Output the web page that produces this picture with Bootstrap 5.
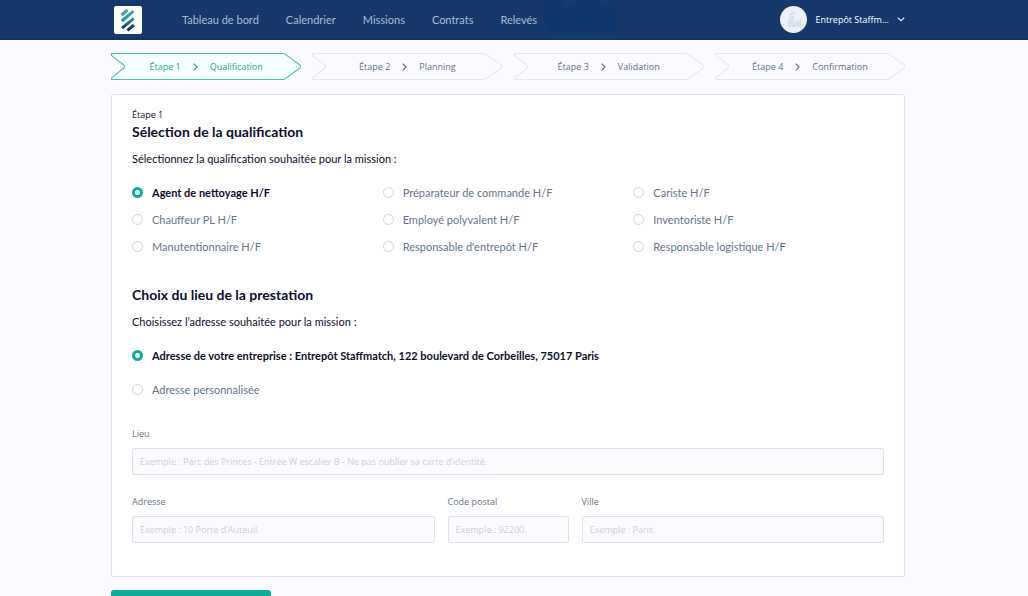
<!DOCTYPE html>
<html lang="fr">
<head>
<meta charset="utf-8">
<meta name="viewport" content="width=device-width, initial-scale=1">
<title>Staffmatch – Nouvelle mission</title>
<link rel="stylesheet" href="https://cdn.jsdelivr.net/npm/bootstrap@5.3.0/dist/css/bootstrap.min.css">
<style>
:root{--navy:#16396c;--ink:#0d0e2c;--slate:#66758a;--line:#e0e2ed;--teal:#13ab98}
body{font-family:Lato,"Open Sans",sans-serif;font-size:11px;line-height:16px;color:var(--ink);background:#fafaff}
.page-shell{padding-right:12px}
.page-width{width:100%;max-width:794px;margin-inline:auto}
.topbar{background:var(--navy);height:40px;border-bottom:1px solid #0f3263}
.brand-tile{width:28px;height:28px;margin-left:3px;margin-right:40px;background:#fff;border-radius:2px}
.topbar .nav-link{font-size:11px;color:#a9bad3;padding:0}
.main-links{gap:27px}
.nav-shape{position:absolute;left:53%;top:0;height:39px;width:80px;fill:#0f386e}
.avatar{width:27px;height:27px;background:#edf1fa}
.small-text{font-family:"Open Sans",sans-serif;font-size:9px;line-height:14px}
.account{color:#fff;background:none;border:0;padding:0}
.steps{display:grid;grid-template-columns:repeat(4,1fr);gap:11px;margin-top:13px;margin-bottom:14px}
.step{height:27px;color:var(--slate)}
.step > svg{position:absolute;inset:0;width:100%;height:100%;fill:none;stroke:#e7e7ef}
.step a{position:relative;color:inherit;text-decoration:none;gap:12px}
.step.current{color:#2aa595}
.step.current > svg{fill:#f5fffd;stroke:#4ebfb0}
.panel{border:1px solid var(--line);border-radius:2px;background:#fff;padding:13px 20px 33px}
h1,h2{font-size:14px;line-height:20px;font-weight:700;margin:0}
.lead-text{margin:9px 0 12px}
.section-gap{margin-top:25px}
.choice{display:flex;align-items:center;min-height:27px;margin:0;padding:0;gap:9px;color:var(--slate)}
.choice .form-check-input{float:none;flex:none;width:11px;height:11px;margin:0;border:1px solid #d3d5e3;box-shadow:none}
.choice .form-check-input:checked{background:#fff;border:3px solid var(--teal)}
.choice .form-check-input:checked + label{font-weight:700;color:var(--ink)}
.custom-address{margin-top:7px}
.fields{margin-top:24px;display:grid;grid-template-columns:5fr 2fr 5fr;gap:20px 13px}
.fields .wide{grid-column:1/-1}
.fields label{display:block;color:var(--slate);margin-bottom:7px}
.fields .form-control{height:27px;padding:0 7px;border:1px solid var(--line);border-radius:2px;background:#fbfbfe}
.fields .form-control::placeholder{color:#cccfe0}
.next-btn{width:160px;height:40px;margin-top:13px;border:0;border-radius:3px;background:var(--teal)}
</style>
</head>
<body>
<header class="topbar page-shell position-relative">
  <svg class="nav-shape" viewBox="0 0 80 39" aria-hidden="true"><path d="M0 0H16L21 9 29 3Q36 1 46 2 60 3 69 10 76 22 71 33L60 36H12Q0 30 0 18z"/></svg>
  <nav class="page-width h-100 d-flex align-items-center position-relative" aria-label="Navigation principale">
    <a href="#" class="brand-tile d-flex align-items-center justify-content-center" aria-label="Accueil">
      <svg width="16" height="24" viewBox="0 0 16 24" fill="none" stroke-width="3">
        <defs><linearGradient id="g" gradientUnits="userSpaceOnUse" x1="0" y1="2" x2="0" y2="23"><stop offset="0" stop-color="#4aa8a2"/><stop offset=".5" stop-color="#1f918b"/><stop offset=".66" stop-color="#28527b"/><stop offset="1" stop-color="#102c54"/></linearGradient></defs>
        <g stroke="url(#g)"><path d="M1.6 7 7.6 2"/><path d="M1.8 13 13.4 3.2"/><path d="M2 20.2 13.8 10.4"/><path d="M7.4 22.4 14 17"/></g>
      </svg>
    </a>
    <div class="main-links d-flex">
      <a class="nav-link" href="#">Tableau de bord</a>
      <a class="nav-link" href="#">Calendrier</a>
      <a class="nav-link" href="#">Missions</a>
      <a class="nav-link" href="#">Contrats</a>
      <a class="nav-link" href="#">Relevés</a>
    </div>
    <button type="button" class="account small-text d-flex align-items-center ms-auto" aria-haspopup="true">
      <span class="avatar rounded-circle d-flex align-items-center justify-content-center me-2">
        <svg width="14" height="15" viewBox="0 0 14 15" fill="#dcdfee"><path d="M1 15V6h3V4h3v6l3-2v2l4-3v8zM2 5V2l2-2h4v3H4v2z"/></svg>
      </span>
      <span class="me-2">Entrepôt Staffm...</span>
      <svg width="8" height="5" viewBox="0 0 8 5" fill="none" stroke="#dce6f5" stroke-width="1.2"><path d="M.8.8 4 3.8 7.2.8"/></svg>
    </button>
  </nav>
</header>

<main class="page-shell">
  <div class="page-width">
    <ol class="steps small-text list-unstyled" aria-label="Étapes">
      <li class="step current position-relative d-flex align-items-center justify-content-center" aria-current="step">
        <svg viewBox="0 0 190 27" preserveAspectRatio="none"><path d="M.5.5H173L189.5 12.5V14.5L173 26.5H.5V25L13.5 14.5V12.5L.5 2.5z"/></svg>
        <a href="#" class="d-flex align-items-center"><span>Étape 1</span><svg width="5" height="8" viewBox="0 0 5 8" fill="none" stroke="currentColor" stroke-width="1.2"><path d="M.7.7 4 4 .7 7.3"/></svg><span>Qualification</span></a>
      </li>
      <li class="step position-relative d-flex align-items-center justify-content-center">
        <svg viewBox="0 0 190 27" preserveAspectRatio="none"><path d="M.5.5H173L189.5 12.5V14.5L173 26.5H.5V25L13.5 14.5V12.5L.5 2.5z"/></svg>
        <a href="#" class="d-flex align-items-center"><span>Étape 2</span><svg width="5" height="8" viewBox="0 0 5 8" fill="none" stroke="currentColor" stroke-width="1.2"><path d="M.7.7 4 4 .7 7.3"/></svg><span>Planning</span></a>
      </li>
      <li class="step position-relative d-flex align-items-center justify-content-center">
        <svg viewBox="0 0 190 27" preserveAspectRatio="none"><path d="M.5.5H173L189.5 12.5V14.5L173 26.5H.5V25L13.5 14.5V12.5L.5 2.5z"/></svg>
        <a href="#" class="d-flex align-items-center"><span>Étape 3</span><svg width="5" height="8" viewBox="0 0 5 8" fill="none" stroke="currentColor" stroke-width="1.2"><path d="M.7.7 4 4 .7 7.3"/></svg><span>Validation</span></a>
      </li>
      <li class="step position-relative d-flex align-items-center justify-content-center">
        <svg viewBox="0 0 190 27" preserveAspectRatio="none"><path d="M.5.5H173L189.5 12.5V14.5L173 26.5H.5V25L13.5 14.5V12.5L.5 2.5z"/></svg>
        <a href="#" class="d-flex align-items-center"><span>Étape 4</span><svg width="5" height="8" viewBox="0 0 5 8" fill="none" stroke="currentColor" stroke-width="1.2"><path d="M.7.7 4 4 .7 7.3"/></svg><span>Confirmation</span></a>
      </li>
    </ol>

    <form>
      <div class="panel">
        <div class="small-text">Étape 1</div>
        <h1>Sélection de la qualification</h1>
        <p class="lead-text">Sélectionnez la qualification souhaitée pour la mission :</p>
        <div class="row row-cols-3 g-0">
          <div class="col choice"><input class="form-check-input" type="radio" name="job" id="j1" checked><label for="j1">Agent de nettoyage H/F</label></div>
          <div class="col choice"><input class="form-check-input" type="radio" name="job" id="j2"><label for="j2">Préparateur de commande H/F</label></div>
          <div class="col choice"><input class="form-check-input" type="radio" name="job" id="j3"><label for="j3">Cariste H/F</label></div>
          <div class="col choice"><input class="form-check-input" type="radio" name="job" id="j4"><label for="j4">Chauffeur PL H/F</label></div>
          <div class="col choice"><input class="form-check-input" type="radio" name="job" id="j5"><label for="j5">Employé polyvalent H/F</label></div>
          <div class="col choice"><input class="form-check-input" type="radio" name="job" id="j6"><label for="j6">Inventoriste H/F</label></div>
          <div class="col choice"><input class="form-check-input" type="radio" name="job" id="j7"><label for="j7">Manutentionnaire H/F</label></div>
          <div class="col choice"><input class="form-check-input" type="radio" name="job" id="j8"><label for="j8">Responsable d'entrepôt H/F</label></div>
          <div class="col choice"><input class="form-check-input" type="radio" name="job" id="j9"><label for="j9">Responsable logistique H/F</label></div>
        </div>

        <h2 class="section-gap">Choix du lieu de la prestation</h2>
        <p class="lead-text">Choisissez l’adresse souhaitée pour la mission :</p>
        <div class="choice"><input class="form-check-input" type="radio" name="place" id="p1" checked><label for="p1">Adresse de votre entreprise : Entrepôt Staffmatch, 122 boulevard de Corbeilles, 75017 Paris</label></div>
        <div class="choice custom-address"><input class="form-check-input" type="radio" name="place" id="p2"><label for="p2">Adresse personnalisée</label></div>

        <div class="fields small-text">
          <div class="wide"><label for="lieu">Lieu</label><input class="form-control small-text" type="text" id="lieu" placeholder="Exemple : Parc des Princes - Entrée W escalier B - Ne pas oublier sa carte d’identité."></div>
          <div><label for="adresse">Adresse</label><input class="form-control small-text" type="text" id="adresse" placeholder="Exemple : 10 Porte d’Auteuil."></div>
          <div><label for="cp">Code postal</label><input class="form-control small-text" type="text" id="cp" placeholder="Exemple : 92200."></div>
          <div><label for="ville">Ville</label><input class="form-control small-text" type="text" id="ville" placeholder="Exemple : Paris."></div>
        </div>
      </div>
      <button type="submit" class="next-btn d-block" aria-label="Étape suivante"></button>
    </form>
  </div>
</main>
<script src="https://cdn.jsdelivr.net/npm/bootstrap@5.3.0/dist/js/bootstrap.bundle.min.js"></script>
</body>
</html>
